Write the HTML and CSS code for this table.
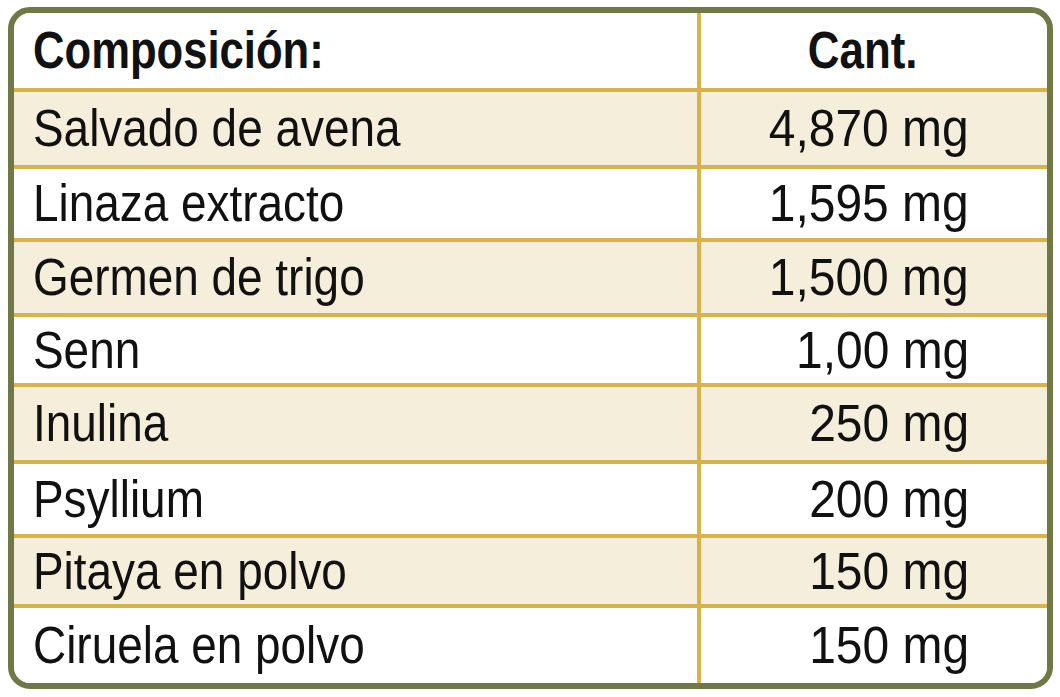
FILE: index.html
```html
<!DOCTYPE html>
<html lang="es">
<head>
<meta charset="utf-8">
<link rel="stylesheet" href="styles.css">
</head>
<body>
<div class="card">
  <div class="grid">
    <div class="cell head name"><span class="txt">Composición:</span></div>
    <div class="cell head qty"><span class="txt">Cant.</span></div>

    <div class="cell alt name"><span class="txt">Salvado de avena</span></div>
    <div class="cell alt qty"><span class="txt">4,870 mg</span></div>

    <div class="cell name"><span class="txt">Linaza extracto</span></div>
    <div class="cell qty"><span class="txt">1,595 mg</span></div>

    <div class="cell alt name"><span class="txt">Germen de trigo</span></div>
    <div class="cell alt qty"><span class="txt">1,500 mg</span></div>

    <div class="cell name"><span class="txt">Senn</span></div>
    <div class="cell qty"><span class="txt">1,00 mg</span></div>

    <div class="cell alt name"><span class="txt">Inulina</span></div>
    <div class="cell alt qty"><span class="txt">250 mg</span></div>

    <div class="cell name"><span class="txt">Psyllium</span></div>
    <div class="cell qty"><span class="txt">200 mg</span></div>

    <div class="cell alt name"><span class="txt">Pitaya en polvo</span></div>
    <div class="cell alt qty"><span class="txt">150 mg</span></div>

    <div class="cell name"><span class="txt">Ciruela en polvo</span></div>
    <div class="cell qty"><span class="txt">150 mg</span></div>
  </div>
</div>
</body>
</html>
```

FILE: styles.css
```css
html, body {
  margin: 0;
  padding: 0;
  background: #ffffff;
}

body {
  padding: 7px 7px 8px 8px;
  font-family: "Liberation Sans", Arial, sans-serif;
  color: #111111;
}

.card {
  width: 1033px;
  height: 670px;
  border: 6px solid #6f7846;
  border-radius: 22px;
  overflow: hidden;
  background: #ffffff;
}

.grid {
  display: grid;
  grid-template-columns: 683px 1fr;
  grid-template-rows: 75px 73px 69px 71px 66px 73px 70px 66px 1fr;
  gap: 4px;
  height: 100%;
  background: #d8b24a;
}

.cell {
  display: flex;
  align-items: center;
  background: #ffffff;
  font-size: 51px;
  line-height: 1;
  overflow: hidden;
}

.cell.alt {
  background: #f4eedb;
}

.txt {
  display: inline-block;
  white-space: nowrap;
}

.name {
  padding-left: 19px;
}

.name .txt {
  transform: scaleX(0.9);
  transform-origin: left center;
}

.qty {
  justify-content: flex-end;
  padding-right: 78px;
}

.qty .txt {
  transform: scaleX(0.94);
  transform-origin: right center;
}

.head {
  font-weight: bold;
}

.head.name .txt {
  transform: scaleX(0.855);
}

.head.qty {
  padding-right: 130px;
}

.head.qty .txt {
  transform: scaleX(0.86);
}
```
